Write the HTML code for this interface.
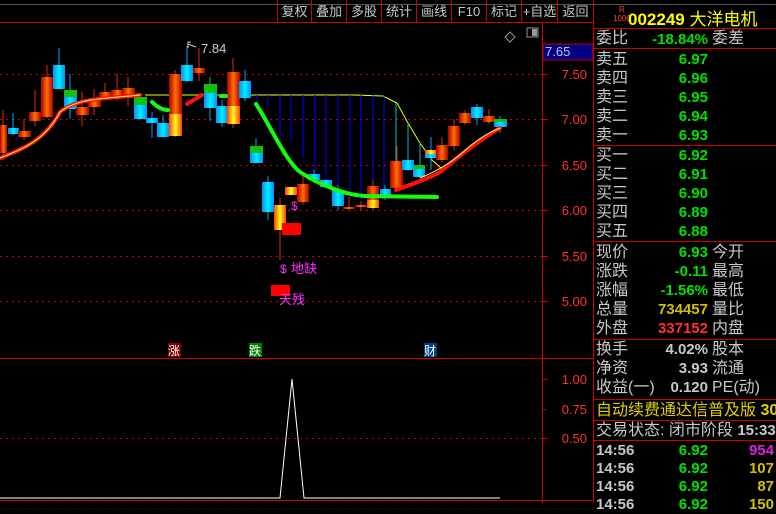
<!DOCTYPE html>
<html><head><meta charset="utf-8"><style>
*{margin:0;padding:0;box-sizing:border-box}
body{width:776px;height:503px;background:#000;overflow:hidden;position:relative;font-family:"Liberation Sans","WenQuanYi Zen Hei",sans-serif;color:#c0c0c0}
.a{position:absolute;white-space:nowrap}
.tb{position:absolute;top:0;height:22px;font-size:13px;line-height:24px;text-align:center;border-left:1px solid #c00;color:#c8c8c8;white-space:nowrap}
.rl{position:absolute;left:596px;font-size:16px;line-height:19px;color:#c8c8c8;white-space:nowrap}
.rv{position:absolute;right:68px;font-size:15px;line-height:19px;font-weight:bold;text-align:right;white-space:nowrap}
.rr{position:absolute;left:712px;font-size:16px;line-height:19px;color:#c8c8c8;white-space:nowrap}
.hl{position:absolute;left:593px;width:183px;height:1px;background:#c00}
.g{color:#00e000}
</style></head><body>
<div class="a" style="left:0;top:4px;width:776px;height:1px;background:#555"></div>
<div class="tb" style="left:277px;width:34px">复权</div>
<div class="tb" style="left:311px;width:35px">叠加</div>
<div class="tb" style="left:346px;width:35px">多股</div>
<div class="tb" style="left:381px;width:35px">统计</div>
<div class="tb" style="left:416px;width:35px">画线</div>
<div class="tb" style="left:451px;width:35px">F10</div>
<div class="tb" style="left:486px;width:35px">标记</div>
<div class="tb" style="left:521px;width:36px">+自选</div>
<div class="tb" style="left:557px;width:36px">返回</div>
<svg class="a" style="left:0;top:0" width="593" height="503">
<defs>
<linearGradient id="r" x1="0" x2="1"><stop offset="0" stop-color="#b00000"/><stop offset=".5" stop-color="#ff7000"/><stop offset="1" stop-color="#b00000"/></linearGradient>
<linearGradient id="b" x1="0" x2="1"><stop offset="0" stop-color="#0090ff"/><stop offset=".5" stop-color="#00f0ff"/><stop offset="1" stop-color="#0090ff"/></linearGradient>
<linearGradient id="y" x1="0" x2="1"><stop offset="0" stop-color="#ff4000"/><stop offset=".5" stop-color="#ffff20"/><stop offset="1" stop-color="#ff4000"/></linearGradient>
</defs>
<line x1="0" y1="22.5" x2="593" y2="22.5" stroke="#c00"/>
<line x1="542.5" y1="22" x2="542.5" y2="503" stroke="#c00"/>
<line x1="0" y1="358.5" x2="593" y2="358.5" stroke="#c00"/>
<line x1="0" y1="500.5" x2="593" y2="500.5" stroke="#c00"/>
<g stroke="#c00" stroke-dasharray="2,4">
<line x1="0" y1="74.5" x2="542" y2="74.5"/><line x1="0" y1="119.5" x2="542" y2="119.5"/><line x1="0" y1="165.5" x2="542" y2="165.5"/><line x1="0" y1="210.5" x2="542" y2="210.5"/><line x1="0" y1="256.5" x2="542" y2="256.5"/><line x1="0" y1="301.5" x2="542" y2="301.5"/><line x1="0" y1="438.5" x2="542" y2="438.5"/>
</g>
<g stroke="#c00"><line x1="543" y1="74.5" x2="548" y2="74.5"/><line x1="543" y1="119.5" x2="548" y2="119.5"/><line x1="543" y1="165.5" x2="548" y2="165.5"/><line x1="543" y1="210.5" x2="548" y2="210.5"/><line x1="543" y1="256.5" x2="548" y2="256.5"/><line x1="543" y1="301.5" x2="548" y2="301.5"/><line x1="543" y1="379.5" x2="548" y2="379.5"/><line x1="543" y1="409.5" x2="546" y2="409.5"/><line x1="543" y1="438.5" x2="548" y2="438.5"/></g>
<g fill="#ff3030" font-size="13" text-anchor="end" font-family="Liberation Sans">
<text x="587" y="79">7.50</text><text x="587" y="124">7.00</text><text x="587" y="170">6.50</text><text x="587" y="215">6.00</text><text x="587" y="261">5.50</text><text x="587" y="306">5.00</text><text x="587" y="384">1.00</text><text x="587" y="414">0.75</text><text x="587" y="443">0.50</text>
</g>
<rect x="543" y="44" width="50" height="16" fill="#000080" stroke="#c00"/>
<text x="545" y="56" fill="#c0c0ff" font-size="13">7.65</text>
<path d="M510 32l5 5-5 5-5-5z" fill="none" stroke="#999"/>
<rect x="527" y="28" width="11" height="9" fill="none" stroke="#999"/><rect x="532" y="29" width="5" height="7" fill="#999"/>
<polyline points="145,95 355,95 383,96 397,103 408,123 420,143 432,160 442,169" fill="none" stroke="#ffff00"/>
<g stroke="#0000ff"><line x1="257" y1="95" x2="257" y2="107"/><line x1="268" y1="95" x2="268" y2="107"/><line x1="280" y1="95" x2="280" y2="140"/><line x1="291" y1="95" x2="291" y2="142"/><line x1="303" y1="95" x2="303" y2="158"/><line x1="315" y1="95" x2="315" y2="172"/><line x1="326" y1="95" x2="326" y2="180"/><line x1="338" y1="95" x2="338" y2="190"/><line x1="350" y1="95" x2="350" y2="198"/><line x1="361" y1="95" x2="361" y2="200"/><line x1="373" y1="95" x2="373" y2="196"/><line x1="384" y1="96" x2="384" y2="190"/></g>
<g stroke="#00c0c0"><line x1="396" y1="103" x2="396" y2="190"/><line x1="408" y1="123" x2="408" y2="170"/><line x1="420" y1="143" x2="420" y2="170"/><line x1="431" y1="160" x2="431" y2="170"/></g>
<g stroke="#e03000">
<line x1="3" y1="110" x2="3" y2="160"/><line x1="24" y1="119" x2="24" y2="140"/><line x1="35" y1="90" x2="35" y2="126"/><line x1="47" y1="65" x2="47" y2="118"/><line x1="82" y1="92" x2="82" y2="126"/><line x1="94" y1="89" x2="94" y2="115"/><line x1="105" y1="83" x2="105" y2="100"/><line x1="117" y1="74" x2="117" y2="101"/><line x1="128" y1="77" x2="128" y2="106"/><line x1="175" y1="70" x2="175" y2="137"/><line x1="199" y1="48" x2="199" y2="81"/><line x1="233" y1="58" x2="233" y2="128"/><line x1="280" y1="198" x2="280" y2="260"/><line x1="303" y1="176" x2="303" y2="205"/><line x1="349" y1="197" x2="349" y2="210"/><line x1="361" y1="201" x2="361" y2="210"/><line x1="373" y1="180" x2="373" y2="210"/><line x1="397" y1="146" x2="397" y2="190"/><line x1="442" y1="137" x2="442" y2="162"/><line x1="454" y1="119" x2="454" y2="150"/><line x1="465" y1="110" x2="465" y2="125"/><line x1="489" y1="109" x2="489" y2="124"/></g>
<g stroke="#00a0ff">
<line x1="13" y1="113" x2="13" y2="135"/><line x1="59" y1="48" x2="59" y2="89"/><line x1="70" y1="74" x2="70" y2="119"/><line x1="140" y1="94" x2="140" y2="119"/><line x1="152" y1="112" x2="152" y2="138"/><line x1="163" y1="115" x2="163" y2="137"/><line x1="187" y1="46" x2="187" y2="82"/><line x1="210" y1="77" x2="210" y2="121"/><line x1="222" y1="100" x2="222" y2="127"/><line x1="245" y1="70" x2="245" y2="101"/><line x1="256" y1="138" x2="256" y2="163"/><line x1="268" y1="176" x2="268" y2="220"/><line x1="314" y1="170" x2="314" y2="183"/><line x1="338" y1="185" x2="338" y2="210"/><line x1="385" y1="185" x2="385" y2="200"/><line x1="431" y1="137" x2="431" y2="165"/><line x1="477" y1="104" x2="477" y2="125"/><line x1="500" y1="116" x2="500" y2="133"/></g>
<g>
<rect x="0" y="125" width="7" height="28" fill="url(#r)"/>
<rect x="8" y="128" width="11" height="6" fill="url(#b)"/>
<rect x="18" y="131" width="13" height="6" fill="url(#r)"/>
<rect x="29" y="112" width="12" height="9" fill="url(#r)"/>
<rect x="41" y="77" width="12" height="40" fill="url(#r)"/>
<rect x="53" y="65" width="12" height="24" fill="url(#b)"/>
<rect x="64" y="97" width="13" height="12" fill="url(#b)"/><rect x="64" y="90" width="13" height="7" fill="#10c010"/>
<rect x="76" y="107" width="13" height="8" fill="url(#r)"/>
<rect x="88" y="98" width="13" height="9" fill="url(#r)"/>
<rect x="99" y="92" width="13" height="6" fill="url(#r)"/>
<rect x="111" y="90" width="13" height="6" fill="url(#r)"/>
<rect x="122" y="88" width="13" height="9" fill="url(#r)"/>
<rect x="134" y="105" width="13" height="14" fill="url(#b)"/><rect x="134" y="97" width="13" height="8" fill="#10c010"/>
<rect x="146" y="118" width="12" height="5" fill="url(#b)"/>
<rect x="157" y="123" width="12" height="14" fill="url(#b)"/>
<rect x="169" y="74" width="13" height="40" fill="url(#r)"/><rect x="169" y="114" width="13" height="22" fill="url(#y)"/>
<rect x="181" y="65" width="12" height="16" fill="url(#b)"/>
<rect x="193" y="68" width="12" height="5" fill="url(#r)"/>
<rect x="204" y="93" width="13" height="15" fill="url(#b)"/><rect x="204" y="84" width="13" height="9" fill="#10c010"/>
<rect x="216" y="106" width="12" height="17" fill="url(#b)"/>
<rect x="227" y="72" width="13" height="34" fill="url(#r)"/><rect x="227" y="106" width="13" height="18" fill="url(#y)"/>
<rect x="239" y="81" width="12" height="17" fill="url(#b)"/>
<rect x="250" y="153" width="13" height="10" fill="url(#b)"/><rect x="250" y="146" width="13" height="7" fill="#10c010"/>
<rect x="262" y="182" width="12" height="30" fill="url(#b)"/>
<rect x="274" y="205" width="12" height="25" fill="url(#y)"/>
<rect x="285" y="187" width="12" height="8" fill="url(#y)"/>
<rect x="297" y="184" width="12" height="18" fill="url(#r)"/>
<rect x="308" y="174" width="12" height="6" fill="url(#b)"/>
<rect x="320" y="180" width="12" height="7" fill="url(#b)"/>
<rect x="332" y="190" width="12" height="16" fill="url(#b)"/>
<rect x="343" y="207" width="12" height="2" fill="url(#r)"/>
<rect x="355" y="205" width="12" height="2" fill="url(#r)"/>
<rect x="367" y="186" width="12" height="14" fill="url(#r)"/><rect x="367" y="200" width="12" height="8" fill="url(#y)"/>
<rect x="380" y="189" width="11" height="7" fill="url(#b)"/>
<rect x="390" y="161" width="13" height="27" fill="url(#r)"/>
<rect x="402" y="160" width="12" height="10" fill="url(#b)"/>
<rect x="413" y="169" width="12" height="8" fill="url(#b)"/><rect x="413" y="165" width="12" height="4" fill="#10c010"/>
<rect x="425" y="150" width="12" height="4" fill="url(#y)"/><rect x="425" y="154" width="12" height="4" fill="url(#b)"/>
<rect x="436" y="145" width="12" height="15" fill="url(#r)"/>
<rect x="448" y="126" width="12" height="20" fill="url(#r)"/>
<rect x="459" y="113" width="12" height="10" fill="url(#r)"/>
<rect x="471" y="107" width="12" height="11" fill="url(#b)"/>
<rect x="483" y="116" width="12" height="6" fill="url(#r)"/>
<rect x="494" y="122" width="13" height="5" fill="url(#b)"/><rect x="494" y="119" width="13" height="3" fill="#10c010"/>
</g>
<g fill="none" stroke-linecap="round">
<path d="M0 158 C25 148 45 140 60 112 C75 100 95 99 130 96 L140 95" stroke="#ff1010" stroke-width="4"/>
<path d="M0 158 C25 148 45 140 60 112 C75 100 95 99 130 96 L140 95" stroke="#ffff40" stroke-width="1"/>
<path d="M187 104 L202 95" stroke="#ff1010" stroke-width="4"/>
<path d="M396 190 C415 183 430 178 440 172 C455 160 470 146 500 128" stroke="#ff1010" stroke-width="4"/>
<path d="M420 178 C440 170 455 160 470 146 C480 138 490 132 500 128" stroke="#ffff40" stroke-width="1"/>
<path d="M152 102 C158 108 163 110 168 110" stroke="#10ff10" stroke-width="4"/>
<path d="M221 96 L226 96" stroke="#10ff10" stroke-width="4"/>
<path d="M256 104 C270 125 285 160 300 172 C320 185 345 195 365 196 L437 197" stroke="#10ff10" stroke-width="4"/>
</g>
<path d="M188 48 L188 42 L191 42 M188 44 L196 47" stroke="#ccc" fill="none"/>
<text x="201" y="53" fill="#ccc" font-size="13">7.84</text>
<text x="291" y="210" fill="#ff30ff" font-size="12">$</text>
<rect x="282" y="223" width="19" height="12" fill="#ff0000"/>
<text x="280" y="273" fill="#ff30ff" font-size="12">$</text>
<text x="291" y="273" fill="#ff30ff" font-size="13" font-family="WenQuanYi Zen Hei">地缺</text>
<rect x="271" y="285" width="19" height="11" fill="#ff0000"/>
<text x="279" y="304" fill="#ff30ff" font-size="13" font-family="WenQuanYi Zen Hei">天残</text>
<rect x="168" y="343" width="13" height="14" fill="#800000"/><text x="168" y="355" fill="#fff" font-size="12" font-family="WenQuanYi Zen Hei">涨</text>
<rect x="249" y="343" width="13" height="14" fill="#008000"/><text x="249" y="355" fill="#fff" font-size="12" font-family="WenQuanYi Zen Hei">跌</text>
<rect x="424" y="343" width="13" height="14" fill="#004080"/><text x="424" y="355" fill="#fff" font-size="12" font-family="WenQuanYi Zen Hei">财</text>
<polyline points="0,498 280,498 292,379 304,498 500,498" fill="none" stroke="#fff"/>
</svg>
<div class="a" style="left:593px;top:0;width:1px;height:503px;background:#c00"></div>
<div class="a" style="left:613px;top:5px;font-size:8px;line-height:9px;color:#ff4040;text-align:center">R<br>1000</div>
<div class="a" style="left:628px;top:5px;font-size:17px;color:#ffff00;font-weight:bold">002249 <span style="font-weight:normal">大洋电机</span></div>
<div class="hl" style="top:28px"></div>
<div class="rl" style="top:29px">委比</div><div class="rv g" style="top:30px">-18.84%</div><div class="rr" style="top:29px">委差</div>
<div class="hl" style="top:48px"></div>
<div class="rl" style="top:50px">卖五</div><div class="rv g" style="top:50px">6.97</div>
<div class="rl" style="top:69px">卖四</div><div class="rv g" style="top:69px">6.96</div>
<div class="rl" style="top:88px">卖三</div><div class="rv g" style="top:88px">6.95</div>
<div class="rl" style="top:107px">卖二</div><div class="rv g" style="top:107px">6.94</div>
<div class="rl" style="top:126px">卖一</div><div class="rv g" style="top:126px">6.93</div>
<div class="hl" style="top:145px"></div>
<div class="rl" style="top:146px">买一</div><div class="rv g" style="top:146px">6.92</div>
<div class="rl" style="top:165px">买二</div><div class="rv g" style="top:165px">6.91</div>
<div class="rl" style="top:184px">买三</div><div class="rv g" style="top:184px">6.90</div>
<div class="rl" style="top:203px">买四</div><div class="rv g" style="top:203px">6.89</div>
<div class="rl" style="top:222px">买五</div><div class="rv g" style="top:222px">6.88</div>
<div class="hl" style="top:241px"></div>
<div class="rl" style="top:243px">现价</div><div class="rv g" style="top:243px">6.93</div><div class="rr" style="top:243px">今开</div>
<div class="rl" style="top:262px">涨跌</div><div class="rv g" style="top:262px">-0.11</div><div class="rr" style="top:262px">最高</div>
<div class="rl" style="top:281px">涨幅</div><div class="rv g" style="top:281px">-1.56%</div><div class="rr" style="top:281px">最低</div>
<div class="rl" style="top:300px">总量</div><div class="rv" style="top:300px;color:#d0c000">734457</div><div class="rr" style="top:300px">量比</div>
<div class="rl" style="top:319px">外盘</div><div class="rv" style="top:319px;color:#ff3030">337152</div><div class="rr" style="top:319px">内盘</div>
<div class="hl" style="top:339px"></div>
<div class="rl" style="top:340px">换手</div><div class="rv" style="top:340px;color:#c8c8c8">4.02%</div><div class="rr" style="top:340px">股本</div>
<div class="rl" style="top:359px">净资</div><div class="rv" style="top:359px;color:#c8c8c8">3.93</div><div class="rr" style="top:359px">流通</div>
<div class="rl" style="top:378px">收益(一)</div><div class="rv" style="top:378px;color:#c8c8c8">0.120</div><div class="rr" style="top:378px">PE(动)</div>
<div class="hl" style="top:399px"></div>
<div class="rl" style="top:401px;color:#e0d000">自动续费通达信普及版 <b>30</b></div>
<div class="hl" style="top:420px"></div>
<div class="rl" style="top:421px">交易状态: 闭市阶段 <b style="font-size:15px">15:33:</b></div>
<div class="hl" style="top:440px"></div>
<div class="rl" style="top:441px;font-weight:bold;font-size:15px">14:56</div><div class="rv g" style="top:441px">6.92</div><div class="a" style="right:2px;top:441px;font-size:15px;font-weight:bold;line-height:19px;color:#e020e0">954</div>
<div class="rl" style="top:459px;font-weight:bold;font-size:15px">14:56</div><div class="rv g" style="top:459px">6.92</div><div class="a" style="right:2px;top:459px;font-size:15px;font-weight:bold;line-height:19px;color:#d0c000">107</div>
<div class="rl" style="top:477px;font-weight:bold;font-size:15px">14:56</div><div class="rv g" style="top:477px">6.92</div><div class="a" style="right:2px;top:477px;font-size:15px;font-weight:bold;line-height:19px;color:#d0c000">87</div>
<div class="rl" style="top:495px;font-weight:bold;font-size:15px">14:56</div><div class="rv g" style="top:495px">6.92</div><div class="a" style="right:2px;top:495px;font-size:15px;font-weight:bold;line-height:19px;color:#d0c000">150</div>
</body></html>
